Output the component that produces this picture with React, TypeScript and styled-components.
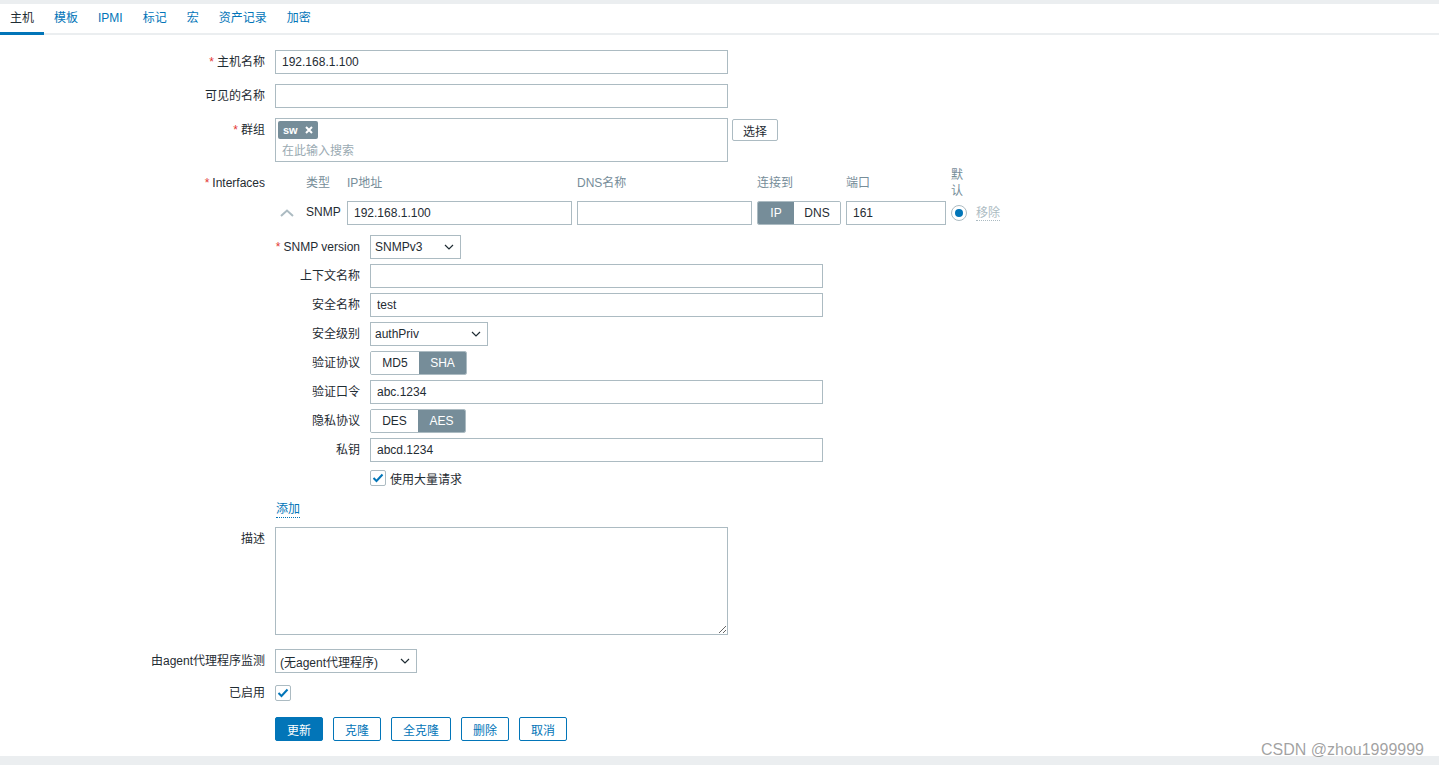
import React from 'react';
import styled, { createGlobalStyle } from 'styled-components';

const GlobalStyle = createGlobalStyle`
  html, body {
    margin: 0;
    padding: 0;
    background: #ffffff;
  }
  body {
    font-family: "Liberation Sans", Arial, "Noto Sans CJK SC", sans-serif;
    font-size: 12px;
    color: #1f2c33;
  }
  * { box-sizing: border-box; }
`;

const Page = styled.div`
  position: relative;
  height: 100vh;
  display: flex;
  flex-direction: column;
  overflow: hidden;
`;

const TopStrip = styled.div`
  height: 4px;
  background: #ebeef0;
`;

const TabBar = styled.nav`
  display: flex;
  border-bottom: 2px solid #ebeef0;
`;

const Tab = styled.a<{ $active?: boolean }>`
  padding: 0 10px;
  line-height: 28px;
  border-bottom: 3px solid ${(p) => (p.$active ? '#0275b8' : 'transparent')};
  margin-bottom: -2px;
  color: ${(p) => (p.$active ? '#1f2c33' : '#0275b8')};
  cursor: pointer;
`;

const Form = styled.form`
  flex: 1;
  padding-top: 15px;
`;

const Row = styled.div<{ $mt?: number }>`
  display: flex;
  align-items: flex-start;
  margin-top: ${(p) => p.$mt ?? 0}px;
`;

const Label = styled.label<{ $lh?: number }>`
  width: 275px;
  padding-right: 10px;
  text-align: right;
  line-height: ${(p) => p.$lh ?? 24}px;
  flex-shrink: 0;
  white-space: nowrap;
`;

const Star = styled.span`
  color: #e33734;
  margin-right: 3px;
`;

const TextInput = styled.input<{ $w?: number }>`
  width: ${(p) => p.$w ?? 453}px;
  height: 24px;
  border: 1px solid #acbbc2;
  border-radius: 0;
  padding: 0 6px;
  font: inherit;
  color: #1f2c33;
  background: #fff;
  outline: none;
`;

const GroupBox = styled.div`
  width: 453px;
  height: 44px;
  border: 1px solid #acbbc2;
  padding: 2px 2px 0 2px;
  display: flex;
  flex-direction: column;
`;

const Tag = styled.span`
  align-self: flex-start;
  display: inline-flex;
  align-items: center;
  gap: 7px;
  height: 18px;
  padding: 0 5px;
  background: #768d99;
  border-radius: 2px;
  color: #fff;
  font-weight: bold;
  font-size: 11px;
`;

const Placeholder = styled.span`
  color: #9aaab2;
  padding-left: 4px;
  padding-top: 2px;
  line-height: 20px;
`;

const GreyButton = styled.button`
  margin-left: 4px;
  margin-top: 1px;
  height: 22px;
  padding: 0 10px;
  border: 1px solid #acbbc2;
  border-radius: 2px;
  background: #fff;
  font: inherit;
  color: #1f2c33;
`;

const IfaceGrid = styled.div`
  display: grid;
  grid-template-columns: 26px 36px 225px 175px 84px 100px 20px auto;
  column-gap: 5px;
  align-items: center;
`;

const HeadCell = styled.div<{ $narrow?: boolean }>`
  color: #768d99;
  height: 32px;
  display: flex;
  align-items: center;
  line-height: 16px;
  ${(p) => (p.$narrow ? 'width: 14px; word-break: break-all;' : '')}
`;

const SnmpRow = styled.div`
  display: contents;
`;

const Collapse = styled.div`
  display: flex;
  justify-content: center;
  padding-right: 2px;
  margin-top: 1px;
`;

const Toggle = styled.div`
  display: inline-flex;
  height: 24px;
  border: 1px solid #acbbc2;
  border-radius: 2px;
  overflow: hidden;
  align-self: start;
`;

const ToggleOption = styled.span<{ $on?: boolean; $w: number }>`
  width: ${(p) => p.$w}px;
  display: flex;
  align-items: center;
  justify-content: center;
  background: ${(p) => (p.$on ? '#768d99' : '#fff')};
  color: ${(p) => (p.$on ? '#fff' : '#1f2c33')};
`;

const Radio = styled.span`
  width: 16px;
  height: 16px;
  border: 1px solid #acbbc2;
  border-radius: 50%;
  display: flex;
  align-items: center;
  justify-content: center;
  &::after {
    content: '';
    width: 8px;
    height: 8px;
    border-radius: 50%;
    background: #0275b8;
  }
`;

const RemoveLink = styled.span`
  color: #acbbc2;
  border-bottom: 1px dotted #acbbc2;
  line-height: 14px;
`;

const Details = styled.div`
  margin-top: 10px;
  display: grid;
  grid-template-columns: 85px auto;
  column-gap: 10px;
  row-gap: 5px;
  justify-items: start;
`;

const SubLabel = styled.span`
  justify-self: end;
  line-height: 24px;
  white-space: nowrap;
`;

const SelectBox = styled.div<{ $w: number }>`
  width: ${(p) => p.$w}px;
  height: 24px;
  border: 1px solid #acbbc2;
  padding: 0 6px 0 4px;
  display: flex;
  align-items: center;
  justify-content: space-between;
  background: #fff;
`;

const CheckRow = styled.div`
  grid-column: 2;
  display: flex;
  align-items: center;
  gap: 4px;
  margin-top: 2px;
  height: 18px;
`;

const CheckBox = styled.span`
  width: 16px;
  height: 16px;
  border: 1px solid #acbbc2;
  border-radius: 2px;
  display: flex;
  align-items: center;
  justify-content: center;
  background: #fff;
`;

const AddLink = styled.a`
  display: inline-block;
  margin-top: 15px;
  margin-left: 1px;
  color: #0275b8;
  line-height: 15px;
  border-bottom: 1px dotted #0275b8;
`;

const TextArea = styled.textarea`
  width: 453px;
  height: 108px;
  border: 1px solid #acbbc2;
  font: inherit;
  resize: both;
  outline: none;
  margin: 0;
  display: block;
`;

const Buttons = styled.div`
  display: flex;
  gap: 10px;
  margin-top: 14px;
  margin-left: 275px;
`;

const Button = styled.button<{ $primary?: boolean }>`
  height: 24px;
  padding: 0 11px;
  border: 1px solid #0275b8;
  border-radius: 2px;
  background: ${(p) => (p.$primary ? '#0275b8' : '#fff')};
  color: ${(p) => (p.$primary ? '#fff' : '#0275b8')};
  font: inherit;
  cursor: pointer;
`;

const Footer = styled.div`
  height: 9px;
  background: #ebeef0;
`;

const Watermark = styled.div`
  position: absolute;
  right: 15px;
  bottom: 6px;
  font-size: 16px;
  color: rgba(100, 100, 100, 0.6);
  pointer-events: none;
`;

const Chevron = () => (
  <svg width="10" height="6" viewBox="0 0 10 6">
    <polyline points="1,1 5,5 9,1" fill="none" stroke="#1f2c33" strokeWidth="1.2" />
  </svg>
);

const Check = () => (
  <svg width="12" height="10" viewBox="0 0 12 10">
    <polyline points="1.5,5 4.5,8 10.5,1.5" fill="none" stroke="#0275b8" strokeWidth="2" />
  </svg>
);

const tabs = ['主机', '模板', 'IPMI', '标记', '宏', '资产记录', '加密'];

export default function App() {
  return (
    <Page>
      <GlobalStyle />
      <TopStrip />
      <TabBar>
        {tabs.map((t, i) => (
          <Tab key={t} $active={i === 0}>{t}</Tab>
        ))}
      </TabBar>
      <Form onSubmit={(e) => e.preventDefault()}>
        <Row>
          <Label><Star>*</Star>主机名称</Label>
          <TextInput defaultValue="192.168.1.100" />
        </Row>
        <Row $mt={10}>
          <Label>可见的名称</Label>
          <TextInput />
        </Row>
        <Row $mt={10}>
          <Label><Star>*</Star>群组</Label>
          <GroupBox>
            <Tag>
              sw
              <svg width="8" height="8" viewBox="0 0 8 8">
                <path d="M1 1L7 7M7 1L1 7" stroke="#fff" strokeWidth="2" />
              </svg>
            </Tag>
            <Placeholder>在此输入搜索</Placeholder>
          </GroupBox>
          <GreyButton type="button">选择</GreyButton>
        </Row>
        <Row $mt={5}>
          <Label $lh={32}><Star>*</Star>Interfaces</Label>
          <div>
            <IfaceGrid>
              <div />
              <HeadCell>类型</HeadCell>
              <HeadCell>IP地址</HeadCell>
              <HeadCell>DNS名称</HeadCell>
              <HeadCell>连接到</HeadCell>
              <HeadCell>端口</HeadCell>
              <HeadCell $narrow>默认</HeadCell>
              <div />
              <SnmpRow>
                <Collapse>
                  <svg width="14" height="8" viewBox="0 0 14 8">
                    <polyline points="1,7 7,1.5 13,7" fill="none" stroke="#acbbc2" strokeWidth="2" />
                  </svg>
                </Collapse>
                <span>SNMP</span>
                <TextInput $w={225} defaultValue="192.168.1.100" style={{ marginTop: 2 }} />
                <TextInput $w={175} style={{ marginTop: 2 }} />
                <Toggle style={{ marginTop: 2 }}>
                  <ToggleOption $on $w={36}>IP</ToggleOption>
                  <ToggleOption $w={46}>DNS</ToggleOption>
                </Toggle>
                <TextInput $w={100} defaultValue="161" style={{ marginTop: 2 }} />
                <Radio style={{ marginTop: 2 }} />
                <RemoveLink style={{ marginTop: 2 }}>移除</RemoveLink>
              </SnmpRow>
            </IfaceGrid>
            <Details>
              <SubLabel><Star>*</Star>SNMP version</SubLabel>
              <SelectBox $w={91}>SNMPv3<Chevron /></SelectBox>
              <SubLabel>上下文名称</SubLabel>
              <TextInput />
              <SubLabel>安全名称</SubLabel>
              <TextInput defaultValue="test" />
              <SubLabel>安全级别</SubLabel>
              <SelectBox $w={118}>authPriv<Chevron /></SelectBox>
              <SubLabel>验证协议</SubLabel>
              <Toggle>
                <ToggleOption $w={48}>MD5</ToggleOption>
                <ToggleOption $on $w={47}>SHA</ToggleOption>
              </Toggle>
              <SubLabel>验证口令</SubLabel>
              <TextInput defaultValue="abc.1234" />
              <SubLabel>隐私协议</SubLabel>
              <Toggle>
                <ToggleOption $w={47}>DES</ToggleOption>
                <ToggleOption $on $w={47}>AES</ToggleOption>
              </Toggle>
              <SubLabel>私钥</SubLabel>
              <TextInput defaultValue="abcd.1234" />
              <CheckRow>
                <CheckBox><Check /></CheckBox>
                使用大量请求
              </CheckRow>
            </Details>
            <AddLink>添加</AddLink>
          </div>
        </Row>
        <Row $mt={9}>
          <Label>描述</Label>
          <TextArea />
        </Row>
        <Row $mt={14}>
          <Label>由agent代理程序监测</Label>
          <SelectBox $w={142}>(无agent代理程序)<Chevron /></SelectBox>
        </Row>
        <Row $mt={10}>
          <Label $lh={20}>已启用</Label>
          <div style={{ paddingTop: 2 }}>
            <CheckBox><Check /></CheckBox>
          </div>
        </Row>
        <Buttons>
          <Button type="button" $primary>更新</Button>
          <Button type="button">克隆</Button>
          <Button type="button">全克隆</Button>
          <Button type="button">删除</Button>
          <Button type="button">取消</Button>
        </Buttons>
      </Form>
      <Footer />
      <Watermark>CSDN @zhou1999999</Watermark>
    </Page>
  );
}
